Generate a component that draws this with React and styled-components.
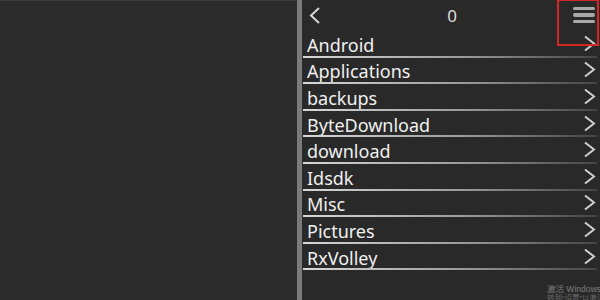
import React from 'react'
import styled, { createGlobalStyle } from 'styled-components'

const folders = ['Android', 'Applications', 'backups', 'ByteDownload', 'download', 'Idsdk', 'Misc', 'Pictures', 'RxVolley']

const GlobalStyle = createGlobalStyle`
    html, body {
        margin: 0;
        padding: 0;
        background: #2a2a2a;
    }
    body {
        font-family: "Noto Sans", "Open Sans", sans-serif;
    }
`

const BackIcon = () => (
    <svg width="12" height="17" viewBox="0 0 12 17">
        <polyline points="10,1 2,8.5 10,16" fill="none" stroke="#d6d6d6" strokeWidth="2" />
    </svg>
)

const ChevronIcon = () => (
    <svg width="13" height="17" viewBox="0 0 13 17">
        <polyline points="2,1.5 11,8.5 2,15.5" fill="none" stroke="#cfcfcf" strokeWidth="2" />
    </svg>
)

const App = () => {
    return (
        <Page>
            <GlobalStyle />
            <LeftPane />
            <Divider />
            <RightPane>
                <Header>
                    <BackButton><BackIcon /></BackButton>
                    <Title>0</Title>
                    <MenuButton>
                        <Bar />
                        <Bar />
                        <Bar />
                    </MenuButton>
                </Header>
                <List>
                    {folders.map(name => (
                        <Row key={name}>
                            <RowName>{name}</RowName>
                            <ChevronIcon />
                        </Row>
                    ))}
                </List>
                <Highlight />
                <Watermark>
                    <span>激活 Windows</span>
                    <span>转到“设置”以激活</span>
                </Watermark>
            </RightPane>
        </Page>
    )
}

export default App

const Page = styled.div`
    display: flex;
    width: 600px;
    height: 300px;
    overflow: hidden;
    background: #2a2a2a;
`;

const LeftPane = styled.div`
    width: 297px;
    height: 100%;
    background: #2b2b2b;
    border-top: 1px solid #3a3a3a;
    box-sizing: border-box;
`;

const Divider = styled.div`
    width: 5px;
    height: 100%;
    background: #7a7a7a;
`;

const RightPane = styled.div`
    position: relative;
    flex: 1;
    height: 100%;
    background: #292929;
    display: flex;
    flex-direction: column;
`;

const Header = styled.div`
    height: 31px;
    display: grid;
    grid-template-columns: 1fr auto 1fr;
    align-items: center;
    padding: 0 5px 0 7px;
    box-sizing: border-box;
`;

const BackButton = styled.div`
    display: flex;
    align-items: center;
    margin-top: -1px;
`;

const Title = styled.div`
    color: #dcdcdc;
    font-size: 17px;
    line-height: 1;
    margin-top: -1px;
`;

const MenuButton = styled.div`
    justify-self: end;
    display: flex;
    flex-direction: column;
    gap: 3px;
    width: 22px;
    margin-top: -1px;
`;

const Bar = styled.div`
    height: 3.5px;
    border-radius: 2px;
    background: #a9a9a9;
`;

const Highlight = styled.div`
    position: absolute;
    z-index: 2;
    left: 255px;
    top: -1px;
    width: 42px;
    height: 47px;
    border: 2px solid #d42626;
    box-sizing: border-box;
    pointer-events: none;
`;

const List = styled.div`
    display: flex;
    flex-direction: column;
    padding-left: 1px;
    padding-right: 3px;
`;

const Row = styled.div`
    position: relative;
    height: 26.6px;
    display: flex;
    align-items: center;
    justify-content: space-between;
    padding: 0 1px 2px 4px;
    box-sizing: border-box;
    &::after {
        content: "";
        position: absolute;
        left: 0;
        right: 0;
        bottom: 0;
        height: 2px;
        background: linear-gradient(to right, #d8d8d8, #9a9a9a 55%, #444);
    }
`;

const RowName = styled.span`
    color: #f0f0f0;
    font-size: 18px;
    line-height: 1;
    margin-top: 3px;
`;

const Watermark = styled.div`
    position: absolute;
    left: 245px;
    top: 284px;
    display: flex;
    flex-direction: column;
    color: #7c7c7c;
    font-family: "Liberation Sans", "Noto Sans CJK SC", sans-serif;
    font-size: 8.5px;
    line-height: 10px;
    white-space: nowrap;
    span + span {
        font-size: 7.5px;
        color: #6a6a6a;
    }
`;
